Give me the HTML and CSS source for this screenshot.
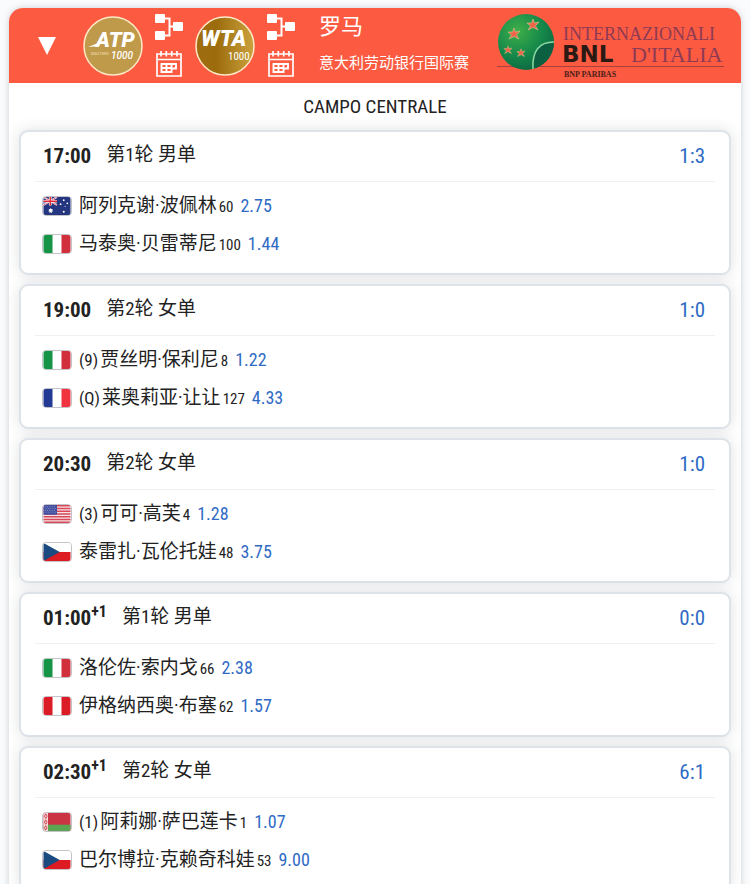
FILE: index.html
```
<!DOCTYPE html>
<html lang="zh-CN">
<head>
    <meta charset="UTF-8">
    <meta name="viewport" content="width=device-width, initial-scale=1.0">
    <title>罗马 - 意大利劳动银行国际赛</title>
    <link rel="stylesheet" href="styles.css">
</head>
<body>
    <svg class="sprites" aria-hidden="true">
        <symbol id="flag-it" viewBox="0 0 30 20">
            <rect width="30" height="20" fill="#fff"/>
            <rect width="10" height="20" fill="#159447"/>
            <rect x="20" width="10" height="20" fill="#d22f3c"/>
        </symbol>
        <symbol id="flag-fr" viewBox="0 0 30 20">
            <rect width="30" height="20" fill="#fff"/>
            <rect width="10" height="20" fill="#233a94"/>
            <rect x="20" width="10" height="20" fill="#f0333f"/>
        </symbol>
        <symbol id="flag-pe" viewBox="0 0 30 20">
            <rect width="30" height="20" fill="#fff"/>
            <rect width="10" height="20" fill="#db1c26"/>
            <rect x="20" width="10" height="20" fill="#db1c26"/>
        </symbol>
        <symbol id="flag-cz" viewBox="0 0 30 20">
            <rect width="30" height="10" fill="#fff"/>
            <rect y="10" width="30" height="10" fill="#dc1c22"/>
            <path d="M0 0L18 10L0 20Z" fill="#1b4a80"/>
        </symbol>
        <symbol id="flag-au" viewBox="0 0 30 20">
            <rect width="30" height="20" fill="#24367f"/>
            <path d="M0 0L15 9M15 0L0 9" stroke="#fff" stroke-width="2"/>
            <path d="M0 0L15 9M15 0L0 9" stroke="#e0394a" stroke-width="0.8"/>
            <path d="M7.5 0V9.5M0 4.7H15" stroke="#fff" stroke-width="3"/>
            <path d="M7.5 0V9.5M0 4.7H15" stroke="#e0293a" stroke-width="1.6"/>
            <g fill="#fff">
                <path d="M8 12l.7 1.6 1.7-.4-.8 1.6 1.3 1.1-1.7.3V18L8 17l-1.2 1v-1.8l-1.7-.3 1.3-1.1-.8-1.6 1.7.4z"/>
                <circle cx="22.5" cy="3.5" r="1"/>
                <circle cx="19" cy="8" r="1"/>
                <circle cx="26.5" cy="7" r="1"/>
                <circle cx="24" cy="10.5" r=".6"/>
                <circle cx="22.5" cy="16.5" r="1.1"/>
            </g>
        </symbol>
        <symbol id="flag-us" viewBox="0 0 30 20">
            <rect width="30" height="20" fill="#f4e3e5"/>
            <path d="M0 .8H30M0 3.9H30M0 7H30M0 10H30M0 13.1H30M0 16.2H30M0 19.2H30" stroke="#d9485a" stroke-width="1.6"/>
            <rect width="15" height="10.8" fill="#4351a0"/>
            <path d="M1.5 2H14M2.5 4H14M1.5 6H14M2.5 8H14" stroke="#a5acd5" stroke-width=".8" stroke-dasharray="1 1.5"/>
        </symbol>
        <symbol id="flag-by" viewBox="0 0 30 20">
            <rect width="30" height="20" fill="#cb3543"/>
            <rect y="13" width="30" height="7" fill="#5ca653"/>
            <rect width="5" height="20" fill="#f4dcdc"/>
            <path d="M2.5 1L4 3.5L2.5 6L1 3.5ZM2.5 7.5L4 10L2.5 12.5L1 10ZM2.5 14L4 16.5L2.5 19L1 16.5Z" fill="none" stroke="#cb3543"/>
        </symbol>
        <symbol id="icon-draw" viewBox="0 0 28 26">
            <path d="M8 4.5H14.5V21.5H8M14.5 12.5H20" fill="none" stroke="currentColor" stroke-width="2"/>
            <rect x="0" y="0" width="10" height="9" rx="1" fill="currentColor"/>
            <rect x="0" y="17" width="10" height="9" rx="1" fill="currentColor"/>
            <rect x="18" y="8" width="10" height="9" rx="1" fill="currentColor"/>
        </symbol>
        <symbol id="icon-calendar" viewBox="0 0 28 26">
            <g fill="none" stroke="currentColor" stroke-width="1.7">
                <path d="M2 3H26V25H2ZM2 8.500H26"/>
                <path d="M6 0V5.500M11.300 0V5.500M16.700 0V5.500M22 0V5.500"/>
                <path d="M6.500 13H21V17.500H16.500V21H6.500ZM6.500 17H16.500M11.500 13V21M16.500 13V17.500" stroke-width="1.900"/>
            </g>
        </symbol>
    </svg>

    <main class="tournament">
        <header class="tournament-header">
            <button class="toggle" aria-label="收起">
                <svg width="20" height="20" viewBox="0 0 20 20"><path d="M1 1H19L10 19Z" fill="#fff"/></svg>
            </button>
            <div class="tour">
                <svg class="tour-logo" viewBox="0 0 60 60" role="img" aria-label="ATP Masters 1000">
                    <circle cx="30" cy="30" r="29" fill="#bf9a4a" stroke="#ffe9c8" stroke-width="1.5"/>
                    <path d="M5 31L18 26L16 30Z" fill="#fff"/>
                    <text class="atp-name" x="13" y="31">ATP</text>
                    <text class="atp-masters" x="8" y="39">MASTERS</text>
                    <text class="atp-points" x="28" y="43">1000</text>
                </svg>
                <nav class="tour-links">
                    <a href="#atp-draw" aria-label="男单签表"><svg><use href="#icon-draw"/></svg></a>
                    <a href="#atp-schedule" aria-label="男单赛程"><svg><use href="#icon-calendar"/></svg></a>
                </nav>
            </div>
            <div class="tour">
                <svg class="tour-logo" viewBox="0 0 60 60" role="img" aria-label="WTA 1000">
                    <defs>
                        <linearGradient id="wta-gold">
                            <stop offset="0" stop-color="#a06d10"/>
                            <stop offset=".35" stop-color="#9c6c0c"/>
                            <stop offset="1" stop-color="#cba23e"/>
                        </linearGradient>
                    </defs>
                    <circle cx="30" cy="30" r="29" fill="url(#wta-gold)" stroke="#ffe9c8" stroke-width="1.5"/>
                    <text class="wta-name" x="6" y="30">WTA</text>
                    <text class="wta-points" x="33" y="44">1000</text>
                </svg>
                <nav class="tour-links">
                    <a href="#wta-draw" aria-label="女单签表"><svg><use href="#icon-draw"/></svg></a>
                    <a href="#wta-schedule" aria-label="女单赛程"><svg><use href="#icon-calendar"/></svg></a>
                </nav>
            </div>
            <div class="tournament-title">
                <h1>罗马</h1>
                <p>意大利劳动银行国际赛</p>
            </div>
            <svg class="sponsor" viewBox="0 0 228 66" role="img" aria-label="Internazionali BNL d'Italia">
                <defs>
                    <radialGradient id="ball" cx=".35" cy=".3" r=".75">
                        <stop offset="0" stop-color="#3fae49"/>
                        <stop offset=".6" stop-color="#15884a"/>
                        <stop offset="1" stop-color="#0b6741"/>
                    </radialGradient>
                    <path id="star" d="M0 -6L1.5 -2L6 -3L2.5 1L5 5L0 2.5L-5 5L-2.5 1L-6 -2L-1.5 -2Z"/>
                </defs>
                <path d="M0 53.5H227" stroke="#a8403f"/>
                <circle cx="29" cy="29" r="28" fill="url(#ball)"/>
                <path d="M36 56C35 38 42 29 57 29A28 28 0 0 1 36 56Z" fill="#0a6040"/>
                <path d="M36 56C35 38 42 29 57 29" fill="none" stroke="#8dd9a4" stroke-width="1.5"/>
                <g fill="#f0644a" stroke="#c9cf94" stroke-width=".6">
                    <use href="#star" x="36" y="12"/>
                    <use href="#star" x="17" y="21"/>
                    <use href="#star" transform="translate(11 37) scale(.7)"/>
                    <use href="#star" transform="translate(24 40) scale(.7)"/>
                </g>
                <text class="sponsor-top" x="66" y="27">INTERNAZIONALI</text>
                <text class="sponsor-bnl" x="65" y="49">BNL</text>
                <text class="sponsor-italia" x="134" y="49">D'ITALIA</text>
                <text class="sponsor-paribas" x="67" y="64">BNP PARIBAS</text>
            </svg>
        </header>

        <h2 class="court">CAMPO CENTRALE</h2>

        <div class="matches">
            <section class="match">
                <div class="match-header">
                    <time>17:00</time>
                    <span class="round">第1轮 男单</span>
                    <a class="h2h" href="#match-1">1:3</a>
                </div>
                <ul class="players">
                    <li>
                        <svg class="flag"><use href="#flag-au"/></svg>
                        <span class="name">阿列克谢·波佩林</span>
                        <span class="rank">60</span>
                        <a class="odds" href="#odds-1">2.75</a>
                    </li>
                    <li>
                        <svg class="flag"><use href="#flag-it"/></svg>
                        <span class="name">马泰奥·贝雷蒂尼</span>
                        <span class="rank">100</span>
                        <a class="odds" href="#odds-1">1.44</a>
                    </li>
                </ul>
            </section>

            <section class="match">
                <div class="match-header">
                    <time>19:00</time>
                    <span class="round">第2轮 女单</span>
                    <a class="h2h" href="#match-2">1:0</a>
                </div>
                <ul class="players">
                    <li>
                        <svg class="flag"><use href="#flag-it"/></svg>
                        <span class="name"><span class="seed">(9)</span>贾丝明·保利尼</span>
                        <span class="rank">8</span>
                        <a class="odds" href="#odds-2">1.22</a>
                    </li>
                    <li>
                        <svg class="flag"><use href="#flag-fr"/></svg>
                        <span class="name"><span class="seed">(Q)</span>莱奥莉亚·让让</span>
                        <span class="rank">127</span>
                        <a class="odds" href="#odds-2">4.33</a>
                    </li>
                </ul>
            </section>

            <section class="match">
                <div class="match-header">
                    <time>20:30</time>
                    <span class="round">第2轮 女单</span>
                    <a class="h2h" href="#match-3">1:0</a>
                </div>
                <ul class="players">
                    <li>
                        <svg class="flag"><use href="#flag-us"/></svg>
                        <span class="name"><span class="seed">(3)</span>可可·高芙</span>
                        <span class="rank">4</span>
                        <a class="odds" href="#odds-3">1.28</a>
                    </li>
                    <li>
                        <svg class="flag"><use href="#flag-cz"/></svg>
                        <span class="name">泰雷扎·瓦伦托娃</span>
                        <span class="rank">48</span>
                        <a class="odds" href="#odds-3">3.75</a>
                    </li>
                </ul>
            </section>

            <section class="match">
                <div class="match-header">
                    <time>01:00<sup>+1</sup></time>
                    <span class="round">第1轮 男单</span>
                    <a class="h2h" href="#match-4">0:0</a>
                </div>
                <ul class="players">
                    <li>
                        <svg class="flag"><use href="#flag-it"/></svg>
                        <span class="name">洛伦佐·索内戈</span>
                        <span class="rank">66</span>
                        <a class="odds" href="#odds-4">2.38</a>
                    </li>
                    <li>
                        <svg class="flag"><use href="#flag-pe"/></svg>
                        <span class="name">伊格纳西奥·布塞</span>
                        <span class="rank">62</span>
                        <a class="odds" href="#odds-4">1.57</a>
                    </li>
                </ul>
            </section>

            <section class="match">
                <div class="match-header">
                    <time>02:30<sup>+1</sup></time>
                    <span class="round">第2轮 女单</span>
                    <a class="h2h" href="#match-5">6:1</a>
                </div>
                <ul class="players">
                    <li>
                        <svg class="flag"><use href="#flag-by"/></svg>
                        <span class="name"><span class="seed">(1)</span>阿莉娜·萨巴莲卡</span>
                        <span class="rank">1</span>
                        <a class="odds" href="#odds-5">1.07</a>
                    </li>
                    <li>
                        <svg class="flag"><use href="#flag-cz"/></svg>
                        <span class="name">巴尔博拉·克赖奇科娃</span>
                        <span class="rank">53</span>
                        <a class="odds" href="#odds-5">9.00</a>
                    </li>
                </ul>
            </section>
        </div>
    </main>
</body>
</html>
```

FILE: styles.css
```
* {
    box-sizing: border-box;
}
body {
    margin: 0;
    padding: 8px 9px;
    font-family: 'Roboto Condensed', Roboto, 'Noto Sans CJK SC', sans-serif;
    font-size: 19px;
    color: #222;
    background-color: #fafbfc;
}
a {
    text-decoration: none;
}
.sprites {
    display: none;
}
.tournament {
    background-color: #fff;
    border-radius: 14px;
    box-shadow: 0 0 6px rgba(60,80,100,0.25);
    overflow: hidden;
}
.tournament-header {
    display: flex;
    align-items: center;
    gap: 12px;
    height: 75px;
    padding: 0 16px 0 28px;
    color: #fff;
    background-color: #fc5b41;
}
.toggle {
    display: flex;
    margin-right: 14px;
    padding: 0;
    border: none;
    background: none;
    cursor: pointer;
}
.tour {
    display: flex;
    align-items: center;
    gap: 12px;
}
.tour-logo {
    width: 60px;
    height: 60px;
}
.tour-logo text {
    font-family: Roboto, sans-serif;
    fill: #fff;
}
.tour-logo .atp-name {
    font-size: 21px;
    font-weight: 900;
    font-style: italic;
}
.tour-logo .atp-masters {
    font-size: 4px;
    fill: #f3dfb4;
}
.tour-logo .atp-points {
    font-size: 10px;
    font-weight: 500;
    font-style: italic;
}
.tour-logo .wta-name {
    font-size: 22px;
    font-weight: 900;
    font-style: italic;
}
.tour-logo .wta-points {
    font-family: 'Roboto Condensed', Roboto, sans-serif;
    font-size: 11px;
}
.tour-links {
    display: flex;
    flex-direction: column;
    gap: 11px;
}
.tour-links a {
    display: flex;
    color: #fff;
}
.tour-links svg {
    width: 28px;
    height: 26px;
}
.tournament-title {
    flex: 1;
    margin-left: 12px;
    white-space: nowrap;
}
.tournament-title h1 {
    margin: 0 0 10px;
    font-size: 22px;
    font-weight: 400;
    line-height: 28px;
}
.tournament-title p {
    margin: 0 0 4px;
    font-size: 15px;
    line-height: 24px;
}
.sponsor {
    flex: none;
    width: 228px;
    height: 66px;
}
.sponsor text {
    font-family: 'Liberation Serif', serif;
    fill: #8e3a55;
}
.sponsor .sponsor-top {
    font-size: 18px;
}
.sponsor .sponsor-bnl {
    font-family: 'DejaVu Sans', sans-serif;
    font-size: 23px;
    font-weight: 700;
    fill: #2b1a14;
}
.sponsor .sponsor-italia {
    font-size: 22px;
}
.sponsor .sponsor-paribas {
    font-size: 8px;
    font-weight: 700;
    fill: #4a1f1c;
}
.court {
    margin: 0;
    font-size: 19px;
    font-weight: 400;
    line-height: 47px;
    text-align: center;
}
.matches {
    display: flex;
    flex-direction: column;
    gap: 9px;
    padding: 0 10px 10px;
}
.match {
    height: 145px;
    padding: 0 14px;
    background-color: #fff;
    border: 2px solid #dde3e8;
    border-radius: 9px;
    box-shadow: 0 0 14px rgba(60,70,90,0.16);
}
.match-header {
    display: flex;
    align-items: center;
    height: 50px;
    padding: 0 10px 2px 8px;
    border-bottom: 1px solid #f0f0f0;
}
time {
    margin-right: 15px;
    font-size: 21px;
    font-weight: 700;
}
time sup {
    font-size: 16px;
    line-height: 0;
}
.round {
    line-height: 24px;
    padding-bottom: 2px;
}
.h2h {
    margin-left: auto;
    font-size: 21px;
    color: #2f6bc4;
}
.players {
    margin: 0;
    padding: 5px 7px 0;
    list-style: none;
}
.players li {
    display: flex;
    align-items: baseline;
    gap: 2px;
    height: 38px;
    line-height: 38px;
}
.flag {
    align-self: center;
    width: 30px;
    height: 20px;
    margin-right: 5px;
    border: 1px solid #c4c4c8;
    border-radius: 4px;
}
.seed {
    margin-right: 2px;
    font-size: 17px;
}
.rank {
    font-size: 15px;
}
.odds {
    margin-left: 5px;
    font-size: 18px;
    color: #2f6bc4;
}
```
